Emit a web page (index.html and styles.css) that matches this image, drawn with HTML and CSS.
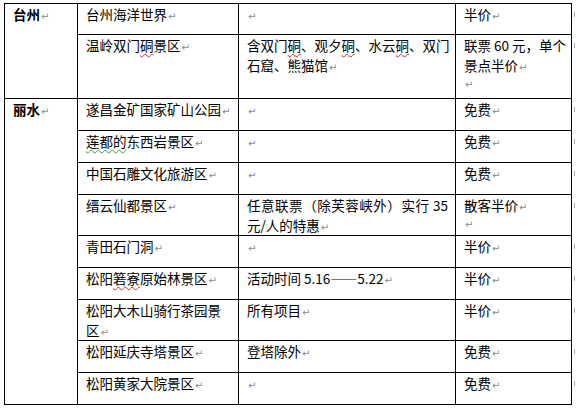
FILE: index.html
```html
<!DOCTYPE html>
<html lang="zh-CN">
<head>
<meta charset="utf-8">
<title>景区优惠</title>
<link rel="stylesheet" href="styles.css">
</head>
<body>
<table class="sheet">
<colgroup><col class="c1"><col class="c2"><col class="c3"><col class="c4"><col class="c5"></colgroup>
<tbody>
<tr class="h31">
<td rowspan="2" class="city">台州<span class="pm">↵</span></td>
<td>台州海洋世界<span class="pm">↵</span></td>
<td><span class="pm">↵</span></td>
<td>半价<span class="pm">↵</span></td>
<td class="end"><span class="em"></span></td>
</tr>
<tr class="h64">
<td>温岭双门<span class="sp">硐</span>景区<span class="pm">↵</span></td>
<td><span class="jl">含双门<span class="sp">硐</span>、观夕<span class="sp">硐</span>、水云<span class="sp">硐</span>、双门</span>石窟、熊猫馆<span class="pm">↵</span></td>
<td><div class="jl">联票 60 元，单个</div><div>景点半价<span class="pm">↵</span></div><div class="solo">↵</div></td>
<td class="end"><span class="em"></span></td>
</tr>
<tr class="h32">
<td rowspan="9" class="city">丽水<span class="pm">↵</span></td>
<td>遂昌金矿国家矿山公园<span class="pm">↵</span></td>
<td><span class="pm">↵</span></td>
<td>免费<span class="pm">↵</span></td>
<td class="end"><span class="em"></span></td>
</tr>
<tr class="h32">
<td><span class="gr">莲都的</span>东西岩景区<span class="pm">↵</span></td>
<td><span class="pm">↵</span></td>
<td>免费<span class="pm">↵</span></td>
<td class="end"><span class="em"></span></td>
</tr>
<tr class="h32">
<td>中国石雕文化旅游区<span class="pm">↵</span></td>
<td><span class="pm">↵</span></td>
<td>免费<span class="pm">↵</span></td>
<td class="end"><span class="em"></span></td>
</tr>
<tr class="h41">
<td>缙云仙都景区<span class="pm">↵</span></td>
<td><span class="jl">任意联票（除芙蓉峡外）实行 35</span>元/人的特惠<span class="pm">↵</span></td>
<td><div>散客半价<span class="pm">↵</span></div><div class="solo">↵</div></td>
<td class="end"><span class="em"></span></td>
</tr>
<tr class="h32">
<td>青田石门洞<span class="pm">↵</span></td>
<td><span class="pm">↵</span></td>
<td>半价<span class="pm">↵</span></td>
<td class="end"><span class="em"></span></td>
</tr>
<tr class="h32">
<td>松阳<span class="sp">箬寮</span>原始林景区<span class="pm">↵</span></td>
<td>活动时间 5.16——5.22<span class="pm">↵</span></td>
<td>半价<span class="pm">↵</span></td>
<td class="end"><span class="em"></span></td>
</tr>
<tr class="h41">
<td>松阳大木山骑行茶园景<br>区<span class="pm">↵</span></td>
<td>所有项目<span class="pm">↵</span></td>
<td>半价<span class="pm">↵</span></td>
<td class="end"><span class="em"></span></td>
</tr>
<tr class="h32">
<td>松阳延庆寺塔景区<span class="pm">↵</span></td>
<td>登塔除外<span class="pm">↵</span></td>
<td>免费<span class="pm">↵</span></td>
<td class="end"><span class="em"></span></td>
</tr>
<tr class="h32">
<td>松阳黄家大院景区<span class="pm">↵</span></td>
<td><span class="pm">↵</span></td>
<td>免费<span class="pm">↵</span></td>
<td class="end"><span class="em"></span></td>
</tr>
</tbody>
</table>
</body>
</html>
```

FILE: styles.css
```css
html, body {
  margin: 0;
  padding: 0;
  background: #ffffff;
  overflow: hidden;
}

body {
  padding: 3px 0 0 4px;
  font-family: "Noto Sans CJK SC", "Liberation Sans", sans-serif;
  font-size: 13.5px;
  color: #000000;
}

.sheet {
  border-collapse: collapse;
  table-layout: fixed;
  width: 572px;
}

.c1 { width: 73px; }
.c2 { width: 161px; }
.c3 { width: 217px; }
.c4 { width: 116px; }
.c5 { width: 5px; }

.sheet td {
  border: 1px solid #000000;
  padding: 0 7px 0 8px;
  vertical-align: top;
  line-height: 20px;
  white-space: nowrap;
  overflow: hidden;
}

.sheet td.end {
  border-top: none;
  border-bottom: none;
  border-right: none;
  padding: 7px 0 0 2px;
  line-height: 0;
}

.h31 { height: 31px; }
.h32 { height: 32px; }
.h41 { height: 41px; }
.h64 { height: 64px; }

.city {
  font-weight: bold;
}

.pm {
  display: inline-block;
  font-family: "DejaVu Sans", sans-serif;
  font-size: 10px;
  line-height: 10px;
  font-weight: normal;
  color: #8a8a8a;
  margin-left: 1px;
  vertical-align: baseline;
}

.solo {
  height: 20px;
  padding-left: 1px;
  font-family: "DejaVu Sans", sans-serif;
  font-size: 10px;
  line-height: 20px;
  color: #8a8a8a;
}

.em {
  display: inline-block;
  width: 1px;
  height: 5px;
  background: #b0b0b0;
}

.jl {
  display: block;
  text-align: justify;
  text-align-last: justify;
}

.sp {
  text-decoration: underline wavy #e02020;
  text-decoration-thickness: 1px;
  text-underline-offset: 2px;
}

.gr {
  text-decoration: underline wavy #30a030;
  text-decoration-thickness: 1px;
  text-underline-offset: 2px;
}
```
